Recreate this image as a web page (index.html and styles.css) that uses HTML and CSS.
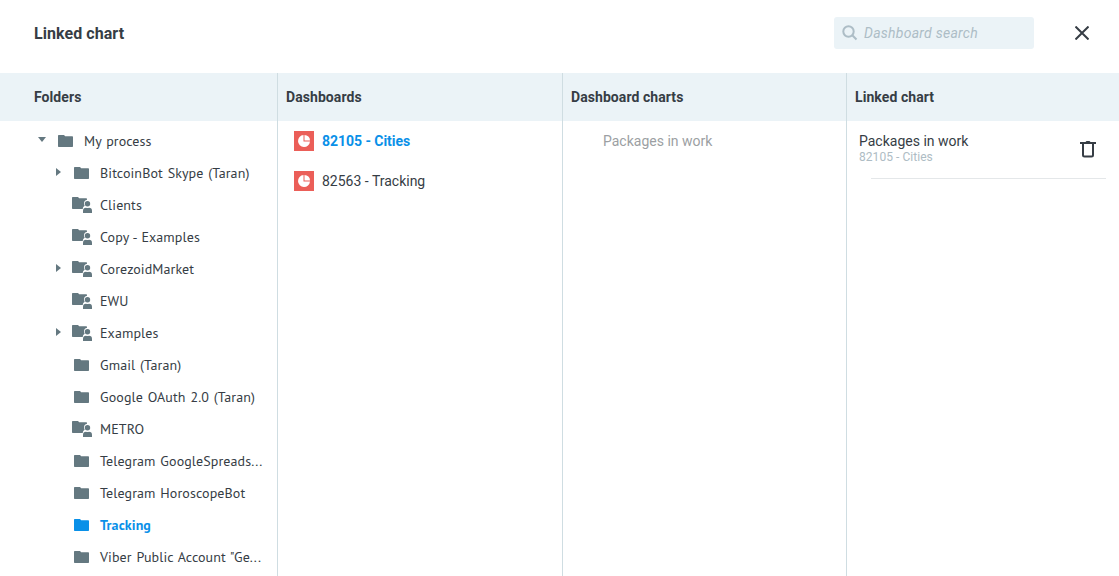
FILE: index.html
```
<!DOCTYPE html>
<html lang="en">
<head>
<meta charset="utf-8">
<title>Linked chart</title>
<link rel="stylesheet" href="styles.css">
</head>
<body>
<svg width="0" height="0" class="defs">
  <symbol id="folder" viewBox="0 0 20 16"><path d="M2 2.700q0-.7.7-.7h5.300l1.200 1.200h7.100q.7 0 .7.7v9.400q0 .7-.7.7H2.700q-.7 0-.7-.7z"/></symbol>
  <symbol id="shared" viewBox="0 0 20 16"><path d="M0 .7q0-.7.7-.7H6l1.200 1.200h7.100q.7 0 .7.7v.8q-3 .4-3 3.800 0 1.200.7 2.300-1.900 1-2 3.200H.7q-.7 0-.7-.7z"/><circle cx="15.500" cy="6.800" r="2.700"/><path d="M11 16v-2q0-3.300 3-3.300 1.500.8 3 0 3 0 3 3.300v2z"/></symbol>
  <symbol id="pie" viewBox="0 0 20 20"><path d="M9.500 4v6.500H16A6 6 0 1 1 9.500 4z"/><path d="M10.500 4A5.500 5.500 0 0 1 16 9.500h-5.500z"/></symbol>
</svg>
<header class="top">
  <h1>Linked chart</h1>
  <label class="search">
    <svg width="16" height="16" viewBox="0 0 16 16"><circle cx="6.500" cy="6.500" r="5.200"/><path d="M10.300 10.300l4.200 4.200"/></svg>
    <input type="text" placeholder="Dashboard search">
  </label>
  <button class="close" aria-label="Close"><svg width="14" height="14" viewBox="0 0 14 14"><path d="M.5.500l13 13M13.500.5l-13 13"/></svg></button>
</header>
<main class="columns">
  <section class="col folders">
    <h2>Folders</h2>
    <ul class="tree">
      <li class="root"><i class="arrow down"></i><svg class="icon"><use href="#folder"/></svg><span>My process</span></li>
      <li><i class="arrow right"></i><svg class="icon"><use href="#folder"/></svg><span>BitcoinBot Skype (Taran)</span></li>
      <li><i class="arrow"></i><svg class="icon"><use href="#shared"/></svg><span>Clients</span></li>
      <li><i class="arrow"></i><svg class="icon"><use href="#shared"/></svg><span>Copy - Examples</span></li>
      <li><i class="arrow right"></i><svg class="icon"><use href="#shared"/></svg><span>CorezoidMarket</span></li>
      <li><i class="arrow"></i><svg class="icon"><use href="#shared"/></svg><span>EWU</span></li>
      <li><i class="arrow right"></i><svg class="icon"><use href="#shared"/></svg><span>Examples</span></li>
      <li><i class="arrow"></i><svg class="icon"><use href="#folder"/></svg><span>Gmail (Taran)</span></li>
      <li><i class="arrow"></i><svg class="icon"><use href="#folder"/></svg><span>Google OAuth 2.0 (Taran)</span></li>
      <li><i class="arrow"></i><svg class="icon"><use href="#shared"/></svg><span>METRO</span></li>
      <li><i class="arrow"></i><svg class="icon"><use href="#folder"/></svg><span>Telegram GoogleSpreads...</span></li>
      <li><i class="arrow"></i><svg class="icon"><use href="#folder"/></svg><span>Telegram HoroscopeBot</span></li>
      <li class="active"><i class="arrow"></i><svg class="icon"><use href="#folder"/></svg><span>Tracking</span></li>
      <li><i class="arrow"></i><svg class="icon"><use href="#folder"/></svg><span>Viber Public Account "Ge...</span></li>
    </ul>
  </section>
  <section class="col">
    <h2>Dashboards</h2>
    <ul class="boards">
      <li class="active"><svg class="pie"><use href="#pie"/></svg><span>82105 - Cities</span></li>
      <li><svg class="pie"><use href="#pie"/></svg><span>82563 - Tracking</span></li>
    </ul>
  </section>
  <section class="col">
    <h2>Dashboard charts</h2>
    <p class="chart">Packages in work</p>
  </section>
  <section class="col">
    <h2>Linked chart</h2>
    <div class="linked">
      <div><div class="name">Packages in work</div><div class="source">82105 - Cities</div></div>
      <svg class="trash" width="16" height="18" viewBox="0 0 16 18"><path d="M0 3h16M3 3v12q0 1.500 1.500 1.500h7q1.500 0 1.500-1.500V3"/><path class="lid" d="M5.500 2l1-1h3l1 1z"/></svg>
    </div>
    <hr>
  </section>
</main>
</body>
</html>
```
FILE: styles.css
```
* { box-sizing: border-box; }
body { margin: 0; height: 576px; overflow: hidden; background: #fff; color: #363d45; font: 14px/20px Roboto, sans-serif; }
.defs { display: block; height: 0; }
h1, h2, p, ul { margin: 0; padding: 0; list-style: none; }
.top { display: flex; align-items: center; height: 73px; padding: 0 30px 7px 34px; }
h1 { flex: 1; padding-top: 2px; font-size: 16px; font-weight: 700; letter-spacing: .06px; }
.search { display: flex; align-items: center; width: 200px; height: 32px; padding-left: 8px; gap: 6px; border-radius: 3px; background: #ebf3f7; }
.search svg { fill: none; stroke: #adbdc6; stroke-width: 2; }
.search input { width: 165px; padding: 0; border: 0; outline: 0; background: none; font: italic 14px/20px Roboto, sans-serif; letter-spacing: .26px; }
.search input::placeholder { color: #adbdc6; opacity: 1; }
.close { display: flex; margin-left: 41px; padding: 0; border: 0; background: none; }
.close svg { fill: none; stroke: #363d45; stroke-width: 2; }
.columns { display: grid; grid-template-columns: 277px 285px 284px 1fr; height: 503px; }
.col + .col { border-left: 1px solid #cfdde2; }
h2 { height: 48px; padding-left: 8px; background: #ebf3f7; font-size: 14px; line-height: 48px; font-weight: 700; letter-spacing: .07px; }
.folders h2 { padding-left: 34px; }
.tree { padding-top: 4px; }
.tree li { display: flex; align-items: center; height: 32px; padding-left: 54px; font: 14px/32px "PT Sans", "Noto Sans", sans-serif; letter-spacing: .1px; word-spacing: 1px; white-space: nowrap; }
.tree .root { padding-left: 38px; }
.icon { width: 20px; height: 16px; margin: 0 8px 0 10px; fill: #647880; }
.arrow { width: 8px; height: 8px; position: relative; top: -1px; background: #647880; clip-path: polygon(0 0, 0 0, 0 0); }
.arrow.down { clip-path: polygon(0 1px, 8px 1px, 4px 6px); }
.arrow.right { clip-path: polygon(2px 0, 7px 4px, 2px 8px); }
.active { color: #0990e8; font-weight: 700 !important; }
.active .icon { fill: #0990e8; }
.boards li { display: flex; align-items: center; gap: 8px; height: 40px; padding-left: 16px; }
.boards .active { letter-spacing: -.04px; }
.pie { width: 20px; height: 20px; background: #eb5e58; fill: #fff; }
.chart { padding: 0 0 0 40px; line-height: 40px; color: #9c9fa3; }
.linked { display: flex; justify-content: space-between; padding: 10px 23px 0 12px; height: 57px; }
.source { font-size: 12px; line-height: 12px; letter-spacing: .05px; color: #aebcc4; }
.trash { margin-top: 9px; fill: none; stroke: #363d45; stroke-width: 2; }
.trash .lid { fill: #363d45; stroke: none; }
hr { height: 1px; margin: 0 13px 0 24px; border: 0; background: #e4e7e9; }
```
